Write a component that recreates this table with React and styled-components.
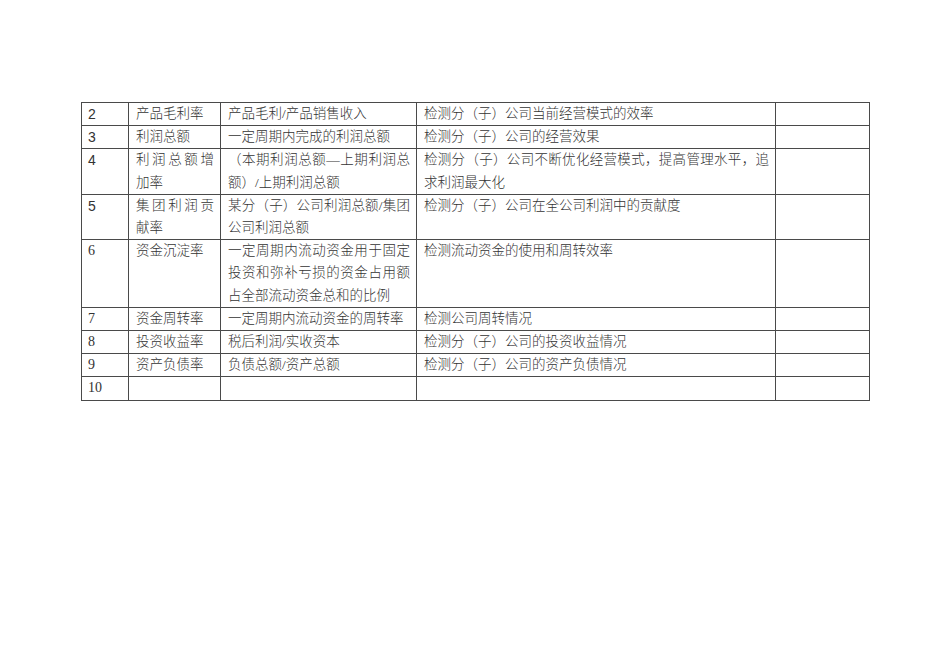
import React from 'react';
import styled, { createGlobalStyle } from 'styled-components';

const columns = [47, 92, 196, 359, 94];

const rows = [
  { no: '2', name: '产品毛利率', formula: '产品毛利/产品销售收入', use: '检测分（子）公司当前经营模式的效率', sans: true },
  { no: '3', name: '利润总额', formula: '一定周期内完成的利润总额', use: '检测分（子）公司的经营效果', sans: true },
  { no: '4', name: '利润总额增加率', formula: '（本期利润总额—上期利润总额）/上期利润总额', use: '检测分（子）公司不断优化经营模式，提高管理水平，追求利润最大化', sans: true },
  { no: '5', name: '集团利润贡献率', formula: '某分（子）公司利润总额/集团公司利润总额', use: '检测分（子）公司在全公司利润中的贡献度', sans: true },
  { no: '6', name: '资金沉淀率', formula: '一定周期内流动资金用于固定投资和弥补亏损的资金占用额占全部流动资金总和的比例', use: '检测流动资金的使用和周转效率' },
  { no: '7', name: '资金周转率', formula: '一定周期内流动资金的周转率', use: '检测公司周转情况' },
  { no: '8', name: '投资收益率', formula: '税后利润/实收资本', use: '检测分（子）公司的投资收益情况' },
  { no: '9', name: '资产负债率', formula: '负债总额/资产总额', use: '检测分（子）公司的资产负债情况' },
  { no: '10', name: '', formula: '', use: '' },
];

function App() {
  return (
    <>
      <GlobalStyle />
      <Page lang="zh-CN">
        <Table>
          <colgroup>
            {columns.map((w, i) => (
              <Col key={i} $w={w} />
            ))}
          </colgroup>
          <tbody>
            {rows.map((r) => (
              <tr key={r.no}>
                <Num $sans={r.sans}>{r.no}</Num>
                <Cell>{r.name}</Cell>
                <Cell>{r.formula}</Cell>
                <Cell>{r.use}</Cell>
                <Cell />
              </tr>
            ))}
          </tbody>
        </Table>
      </Page>
    </>
  );
}

const GlobalStyle = createGlobalStyle`
  html, body {
    margin: 0;
    background: #fff;
  }
`;

const Page = styled.div`
  width: 950px;
  height: 672px;
  box-sizing: border-box;
  padding: 102px 0 0 81px;
  background: #fff;
`;

const Table = styled.table`
  border-collapse: collapse;
  table-layout: fixed;
  width: 789px;
`;

const Col = styled.col`
  width: ${(p) => p.$w}px;
`;

const Cell = styled.td`
  border: 1px solid #4a4a4a;
  padding: 0 6px 0 7px;
  font-family: "Liberation Serif", "Noto Sans CJK SC", serif;
  font-size: 13.5px;
  font-weight: 300;
  color: #333;
  line-height: 22.2px;
  height: 22px;
  vertical-align: top;
  text-align: justify;
  text-justify: inter-character;
  word-break: break-all;
`;

const Num = styled(Cell)`
  padding-left: 6px;
  font-size: 14px;
  font-family: ${(p) => (p.$sans ? '"Liberation Sans", "Noto Sans CJK SC", sans-serif' : '"Liberation Serif", "Noto Sans CJK SC", serif')};
`;

export default App;
